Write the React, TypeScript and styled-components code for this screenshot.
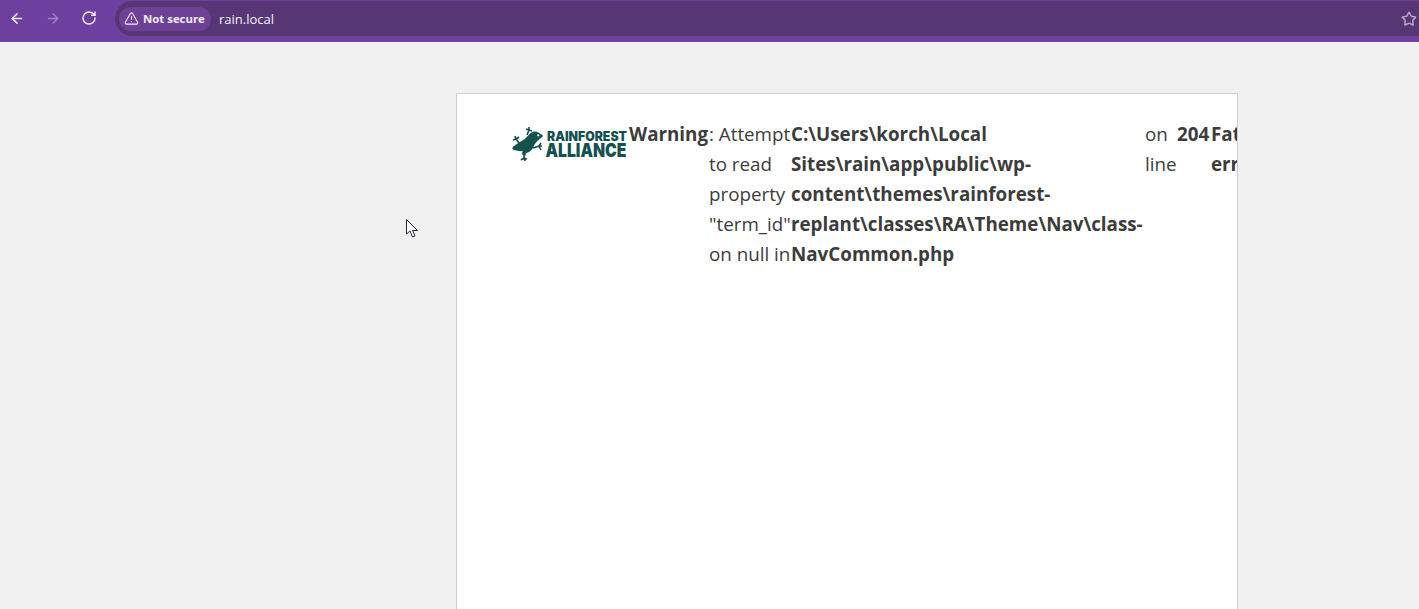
import React from "react";
import styled, { createGlobalStyle } from "styled-components";
import { ArrowLeft, ArrowRight, RotateCw, TriangleAlert, Star } from "lucide-react";

const Global = createGlobalStyle`
  html, body { margin: 0; padding: 0; height: 100%; overflow: hidden; background: #f1f1f1; }
  #root { height: 100%; }
`;

const Page = styled.div`
  height: 609px;
  position: relative;
  display: flex;
  flex-direction: column;
  overflow: hidden;
  font-family: "Open Sans", "Noto Sans", sans-serif;
`;

const Toolbar = styled.header`
  height: 42px;
  flex: none;
  box-sizing: border-box;
  background: #6d3f9f;
  border-bottom: 1px solid #7545a8;
  display: flex;
  align-items: flex-start;
  padding: 1px 0 0 0;
`;

const NavGroup = styled.nav`
  display: flex;
  align-items: center;
  width: 115px;
  flex: none;
  height: 34px;
  padding-left: 9px;
  gap: 20px;
  box-sizing: border-box;
`;

const NavButton = styled.span<{ $dim?: boolean }>`
  display: flex;
  width: 16px;
  height: 16px;
  color: ${(p) => (p.$dim ? "#a084c4" : "#f1ecf7")};
`;

const Omnibox = styled.div`
  flex: 1;
  height: 35px;
  background: #573675;
  border-radius: 18px 0 0 18px;
  display: flex;
  align-items: center;
  padding-left: 4px;
  gap: 8px;
`;

const SecurityChip = styled.div`
  height: 24px;
  width: 92px;
  box-sizing: border-box;
  border-radius: 12px;
  background: #6d4296;
  color: #f1ecf7;
  display: flex;
  align-items: center;
  gap: 4px;
  padding-left: 5px;
  font: 700 11.4px "Open Sans", sans-serif;
  white-space: nowrap;
`;

const Url = styled.span`
  color: #f4f0f8;
  font: 400 13px "Open Sans", sans-serif;
  flex: 1;
`;

const StarSlot = styled.span`
  display: flex;
  margin-right: 2px;
  color: #b5a8c4;
`;

const Viewport = styled.main`
  flex: 1;
  background: #f1f1f1;
  padding: 51px 181px 0 456px;
  min-height: 0;
`;

const Card = styled.section`
  box-sizing: border-box;
  width: 782px;
  height: 560px;
  background: #fff;
  border: 1px solid #cfcfd3;
  border-bottom: none;
  overflow: hidden;
  display: flex;
  align-items: flex-start;
  padding: 25px 0 0 55px;
  color: #3c3c3c;
  font-size: 18.8px;
  line-height: 30px;
`;

const LogoWrap = styled.div`
  flex: none;
  width: 117px;
  height: 38px;
  margin-top: 7px;
`;

const Column = styled.div<{ $w: number; $bold?: boolean }>`
  flex: none;
  width: ${(p) => p.$w}px;
  font-weight: ${(p) => (p.$bold ? 700 : 400)};
`;

const Cursor = styled.svg`
  position: absolute;
  left: 406px;
  top: 219px;
`;

function Logo() {
  return (
    <svg width="116" height="38" viewBox="0 0 116 38">
      <g fill="#14504f" stroke="#14504f">
        <path
          strokeWidth="0.4"
          d="M31 10 C28 7 24 5 21 6 C18 7 16 10 13 13 C9 16 4 18 1 21 C0 23 1 24 3 24 C6 25 9 25 11 25 L10 28 L13 30 L14 27 C18 26 21 23 22 19 C24 16 27 13 31 10 Z"
        />
        <path strokeWidth="1.6" fill="none" d="M15 9 L17 4 L14 3 M17 4 L17 1 M17 4 L20 5" />
        <path strokeWidth="1.6" fill="none" d="M7 17 L4 13 L1 14 M4 13 L3 10 M4 13 L7 11" />
        <path strokeWidth="1.6" fill="none" d="M21 22 L27 20 L29 17 M27 20 L30 20 M27 20 L29 24" />
        <path strokeWidth="1.6" fill="none" d="M12 29 L12 32 L9 34 M12 32 L13 35 M12 32 L15 33" />
      </g>
      <circle cx="26.3" cy="9.4" r="1.1" fill="#fff" />
      <text
        x="35"
        y="15"
        fill="#14504f"
        fontFamily="Inter, sans-serif"
        fontWeight="900"
        fontSize="13"
        textLength="80"
        lengthAdjust="spacingAndGlyphs"
      >
        RAINFOREST
      </text>
      <text
        x="33.5"
        y="31"
        fill="#14504f"
        fontFamily="Inter, sans-serif"
        fontWeight="900"
        fontSize="19"
        textLength="81"
        lengthAdjust="spacingAndGlyphs"
      >
        ALLIANCE
      </text>
    </svg>
  );
}

export default function App() {
  return (
    <Page>
      <Global />
      <Toolbar>
        <NavGroup>
          <NavButton>
            <ArrowLeft size={17} strokeWidth={2.3} />
          </NavButton>
          <NavButton $dim>
            <ArrowRight size={17} strokeWidth={2} />
          </NavButton>
          <NavButton>
            <RotateCw size={16} strokeWidth={2.2} />
          </NavButton>
        </NavGroup>
        <Omnibox>
          <SecurityChip>
            <TriangleAlert size={15} strokeWidth={1.7} />
            Not secure
          </SecurityChip>
          <Url>rain.local</Url>
          <StarSlot>
            <Star size={16} strokeWidth={2.2} />
          </StarSlot>
        </Omnibox>
      </Toolbar>
      <Viewport>
        <Card>
          <LogoWrap>
            <Logo />
          </LogoWrap>
          <Column $w={80} $bold>
            Warning
          </Column>
          <Column $w={82}>: Attempt to read property "term_id" on null in</Column>
          <Column $w={354} $bold>
            C:\Users\korch\Local Sites\rain\app\public\wp-content\themes\rainforest-replant\classes\RA\Theme\Nav\class-NavCommon.php
          </Column>
          <Column $w={32}>on line</Column>
          <Column $w={34} $bold>
            204
          </Column>
          <Column $w={60} $bold>
            Fatal error
          </Column>
        </Card>
      </Viewport>
      <Cursor width="13" height="20" viewBox="0 0 13 20">
        <path
          d="M0.5 0.5 V15 L4 12 L6.5 18 L9 17 L6.5 11.5 L11.5 11.5 Z"
          fill="#fff"
          stroke="#23233a"
          strokeWidth="1"
        />
      </Cursor>
    </Page>
  );
}
